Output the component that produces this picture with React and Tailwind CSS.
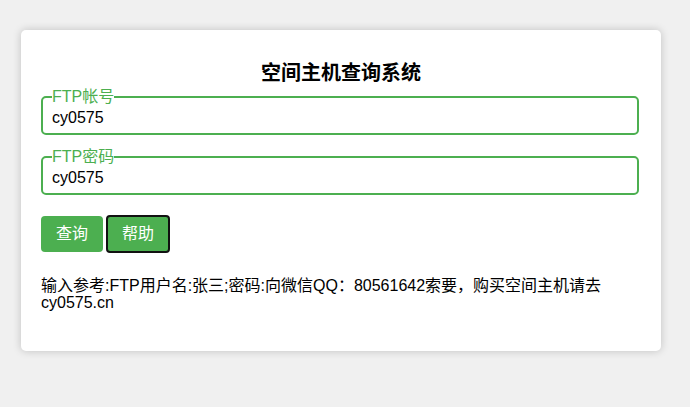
import { useState } from "react";

const font = { fontFamily: '"Liberation Sans", "Noto Sans CJK SC", sans-serif' };

function Field({ label, value, onChange, type = "text" }) {
    return (
        <fieldset className="w-[598px] border-2 border-[#4caf50] rounded-[5px] px-[9px] pt-[3px] pb-[3px]">
            <legend className="text-[#4caf50] text-base leading-[12px] px-0">
                {label}
            </legend>
            <input
                type={type}
                value={value}
                onChange={(e) => onChange(e.target.value)}
                className="w-full h-[18px] text-base leading-[18px] text-black bg-transparent outline-none p-0"
                style={font}
            />
        </fieldset>
    );
}

export default function App() {
    const [user, setUser] = useState("cy0575");
    const [pass, setPass] = useState("cy0575");

    return (
        <div className="min-h-screen bg-[#f0f0f0] pt-[30px] pl-[21px]" style={font}>
            <div className="w-[640px] bg-white rounded-[5px] shadow-[0_0_8px_rgba(0,0,0,0.2)] px-5 pt-[31px] pb-[40px]">
                <h2 className="text-center text-[20px] leading-[24px] font-bold text-black">
                    空间主机查询系统
                </h2>

                <div className="mt-[6px]">
                    <Field label="FTP帐号" value={user} onChange={setUser} />
                </div>
                <div className="mt-4">
                    <Field label="FTP密码" value={pass} onChange={setPass} />
                </div>

                {/* Buttons */}
                <div className="flex items-center gap-[3px] mt-5">
                    <button className="h-9 px-[15px] bg-[#4caf50] text-white text-base leading-[18px] rounded-[4px] cursor-pointer">
                        查询
                    </button>
                    <button className="h-[38px] px-[14px] bg-[#4caf50] text-white text-base leading-[18px] rounded-[4px] border-2 border-[#111] cursor-pointer">
                        帮助
                    </button>
                </div>

                <p className="mt-6 text-base leading-[17px] text-black">
                    输入参考:FTP用户名:张三;密码:向微信QQ：80561642索要，购买空间主机请去cy0575.cn
                </p>
            </div>
        </div>
    );
}
